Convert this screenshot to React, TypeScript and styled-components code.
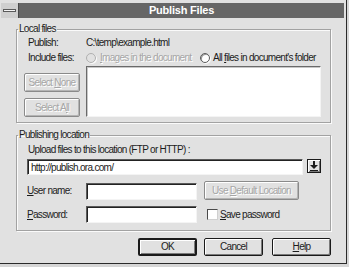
import React from "react";
import styled, { createGlobalStyle } from "styled-components";

const Global = createGlobalStyle`
  html, body { margin: 0; padding: 0; background: #d6d6d6; }
  body { font-family: "Liberation Sans", Arial, sans-serif; }
  * { box-sizing: border-box; }
`;

const Screen = styled.div`
  width: 349px;
  height: 267px;
  background: #d6d6d6;
  overflow: hidden;
`;

const Window = styled.div`
  width: 347px;
  height: 264px;
  background: #e1e1e1;
  border-right: 1px solid #2a2a2a;
  border-bottom: 1px solid #2a2a2a;
  padding: 3px 2px 0 1px;
  display: flex;
  flex-direction: column;
  font-size: 10px;
  letter-spacing: -0.7px;
  color: #1c1c1c;
`;

const TitleRow = styled.div`
  display: flex;
  height: 15px;
`;

const SysBox = styled.div`
  width: 18px;
  background: #cfcfcf;
  border-right: 1px solid #4a4a4a;
  display: flex;
  align-items: center;
  padding-left: 2px;
`;

const SysDash = styled.span`
  width: 13px;
  height: 3px;
  background: #f4f4f4;
  border: 1px solid #5a5a5a;
`;

const TitleBar = styled.div`
  flex: 1;
  margin-left: 0;
  background: #666666;
  color: #ffffff;
  font-weight: bold;
  font-size: 11px;
  letter-spacing: -0.2px;
  line-height: 15px;
  text-align: center;
`;

const Body = styled.div`
  padding: 0 13px 0 15px;
  display: flex;
  flex-direction: column;
`;

const Group = styled.fieldset<{ $top: number }>`
  margin: ${(p) => p.$top}px 0 0 0;
  padding: 0;
  border: 1px solid #a2a2a2;
  box-shadow: inset 1px 1px 0 #fafafa, 1px 1px 0 #fafafa;
  min-width: 0;
`;

const Legend = styled.legend`
  margin-left: 1px;
  padding: 0 1px;
  line-height: 12px;
  font-size: 10px;
`;

const LocalBody = styled.div`
  padding: 0 9px 5px 7px;
  display: flex;
  flex-direction: column;
`;

const InfoRow = styled.div`
  display: flex;
  align-items: center;
  height: 15px;
  padding-left: 4px;
`;

const InfoLabel = styled.span<{ $w?: number }>`
  width: ${(p) => p.$w ?? 58}px;
  flex: none;
  white-space: nowrap;
`;

const Option = styled.label<{ $w?: number; $disabled?: boolean }>`
  display: flex;
  align-items: center;
  gap: ${(p) => (p.$disabled ? 4 : 3)}px;
  width: ${(p) => (p.$w ? `${p.$w}px` : "auto")};
  white-space: nowrap;
  color: ${(p) => (p.$disabled ? "#a6a6a6" : "inherit")};
  text-shadow: ${(p) => (p.$disabled ? "1px 1px 0 #ffffff" : "none")};
`;

const Radio = styled.span<{ $disabled?: boolean }>`
  width: 10px;
  height: 10px;
  flex: none;
  border-radius: 50%;
  background: ${(p) => (p.$disabled ? "#e1e1e1" : "#ffffff")};
  border: 1px solid ${(p) => (p.$disabled ? "#b0b0b0" : "#5a5a5a")};
  box-shadow: ${(p) =>
    p.$disabled ? "1px 1px 0 #fafafa" : "inset 1px 1px 0 #9a9a9a, 1px 1px 0 #fafafa"};
`;

const ListRow = styled.div`
  display: flex;
  gap: 6px;
  margin-top: 1px;
  height: 51px;
`;

const SideButtons = styled.div`
  width: 56px;
  display: flex;
  flex-direction: column;
  justify-content: flex-end;
  gap: 6px;
`;

const ListBox = styled.div`
  flex: 1;
  background: #ffffff;
  border: 1px solid;
  border-color: #6a6a6a #f4f4f4 #f4f4f4 #6a6a6a;
  box-shadow: inset 1px 1px 0 #c8c8c8;
`;

const Button = styled.button<{ $w?: number; $h?: number; $default?: boolean }>`
  width: ${(p) => (p.$w ? `${p.$w}px` : "100%")};
  height: ${(p) => p.$h ?? 18}px;
  flex: none;
  margin: 0;
  padding: 0;
  font: inherit;
  letter-spacing: inherit;
  color: #1c1c1c;
  background: #e1e1e1;
  border: ${(p) => (p.$default ? 2 : 1)}px solid #1a1a1a;
  border-radius: 2px;
  box-shadow: inset 1px 1px 0 #ffffff, inset -1px -1px 0 #7a7a7a;
  line-height: 1;
  white-space: nowrap;
  &:disabled {
    color: #a6a6a6;
    text-shadow: 1px 1px 0 #ffffff;
    border-color: #8a8a8a;
    box-shadow: inset 1px 1px 0 #ffffff, inset -1px -1px 0 #b4b4b4;
  }
`;

const PubBody = styled.div`
  padding: 3px 9px 7px 10px;
  display: flex;
  flex-direction: column;
`;

const UploadLabel = styled.div`
  line-height: 12px;
  padding-left: 1px;
  white-space: nowrap;
`;

const UrlRow = styled.div`
  display: flex;
  gap: 4px;
  margin-top: 3px;
  height: 16px;
`;

const TextBox = styled.div<{ $w?: number; $h?: number }>`
  width: ${(p) => (p.$w ? `${p.$w}px` : "auto")};
  flex: ${(p) => (p.$w ? "none" : "1")};
  height: ${(p) => p.$h ?? 17}px;
  background: #ffffff;
  border: 1px solid;
  border-color: #5a5a5a #f4f4f4 #f4f4f4 #5a5a5a;
  box-shadow: inset 1px 1px 0 #222222;
  padding: 0 0 0 3px;
  display: flex;
  align-items: center;
  white-space: nowrap;
  overflow: hidden;
`;

const DropButton = styled.div`
  width: 14px;
  height: 14px;
  flex: none;
  background: #e1e1e1;
  border: 1px solid #1a1a1a;
  box-shadow: inset 1px 1px 0 #ffffff, inset -1px -1px 0 #7a7a7a;
  display: flex;
  align-items: center;
  justify-content: center;
`;

const FormRow = styled.div<{ $top: number; $h: number; $align: string }>`
  display: flex;
  align-items: ${(p) => p.$align};
  margin-top: ${(p) => p.$top}px;
  height: ${(p) => p.$h}px;
`;

const Spacer = styled.span<{ $w: number }>`
  width: ${(p) => p.$w}px;
  flex: none;
`;

const CheckLabel = styled.label`
  display: flex;
  align-items: center;
  gap: 2px;
  white-space: nowrap;
`;

const CheckBox = styled.span`
  width: 11px;
  height: 11px;
  flex: none;
  background: #ffffff;
  border: 1px solid;
  border-color: #4a4a4a #d0d0d0 #d0d0d0 #4a4a4a;
`;

const ButtonRow = styled.div`
  display: flex;
  justify-content: flex-end;
  margin-top: 7px;
`;

const DlgButton = styled(Button)<{ $mr?: number }>`
  margin-right: ${(p) => p.$mr ?? 0}px;
`;

const DownArrow = () => (
  <svg width="8" height="10" viewBox="0 0 8 10">
    <rect x="3" y="0" width="2" height="4" fill="#1a1a1a" />
    <polygon points="0,4 8,4 4,8" fill="#1a1a1a" />
    <rect x="0" y="9" width="8" height="1" fill="#1a1a1a" />
  </svg>
);

export default function App() {
  return (
    <>
      <Global />
      <Screen>
        <Window>
          <TitleRow>
            <SysBox>
              <SysDash />
            </SysBox>
            <TitleBar>Publish Files</TitleBar>
          </TitleRow>
          <Body>
            <Group $top={5}>
              <Legend>Local files</Legend>
              <LocalBody>
                <InfoRow>
                  <InfoLabel>Publish:</InfoLabel>
                  <span>{"C:\\temp\\example.html"}</span>
                </InfoRow>
                <InfoRow>
                  <InfoLabel>Include files:</InfoLabel>
                  <Option $w={114} $disabled>
                    <Radio $disabled />
                    <span>
                      <u>I</u>mages in the document
                    </span>
                  </Option>
                  <Option>
                    <Radio />
                    <span>
                      All <u>f</u>iles in document's folder
                    </span>
                  </Option>
                </InfoRow>
                <ListRow>
                  <SideButtons>
                    <Button $h={19} disabled>
                      Select <u>N</u>one
                    </Button>
                    <Button $h={19} disabled>
                      Select A<u>l</u>l
                    </Button>
                  </SideButtons>
                  <ListBox />
                </ListRow>
              </LocalBody>
            </Group>
            <Group $top={6}>
              <Legend>Publishing location</Legend>
              <PubBody>
                <UploadLabel>Upload files to this location (FTP or HTTP) :</UploadLabel>
                <UrlRow>
                  <TextBox $h={16}>http://publish.ora.com/</TextBox>
                  <DropButton>
                    <DownArrow />
                  </DropButton>
                </UrlRow>
                <FormRow $top={6} $h={19} $align="flex-end">
                  <InfoLabel $w={59} style={{ alignSelf: "center" }}>
                    <u>U</u>ser name:
                  </InfoLabel>
                  <TextBox $w={111} />
                  <Spacer $w={7} />
                  <Button $w={95} $h={19} disabled>
                    Use <u>D</u>efault Location
                  </Button>
                </FormRow>
                <FormRow $top={6} $h={17} $align="center">
                  <InfoLabel $w={59}>
                    <u>P</u>assword:
                  </InfoLabel>
                  <TextBox $w={111} />
                  <Spacer $w={10} />
                  <CheckLabel>
                    <CheckBox />
                    <span>
                      <u>S</u>ave password
                    </span>
                  </CheckLabel>
                </FormRow>
              </PubBody>
            </Group>
            <ButtonRow>
              <DlgButton $w={59} $default $mr={7}>
                OK
              </DlgButton>
              <DlgButton $w={59} $mr={9}>
                Cancel
              </DlgButton>
              <DlgButton $w={59}>
                <u>H</u>elp
              </DlgButton>
            </ButtonRow>
          </Body>
        </Window>
      </Screen>
    </>
  );
}
